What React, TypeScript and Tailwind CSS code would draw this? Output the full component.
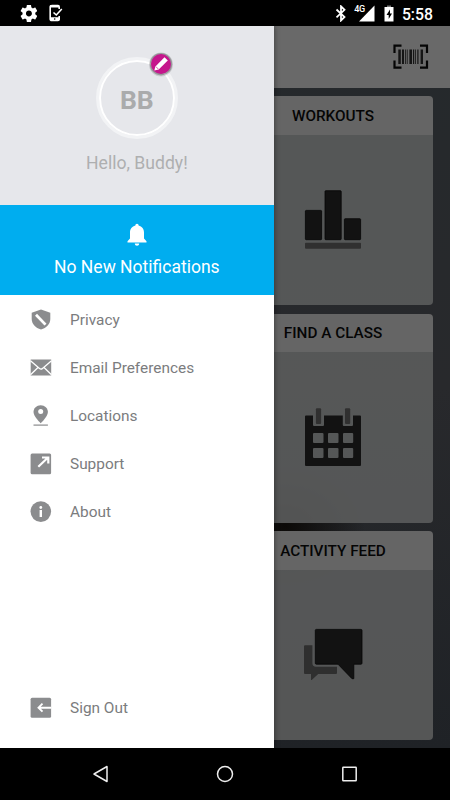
import { useState } from 'react'
import type { ReactNode } from 'react'

const menuItems = [
  { id: 'privacy', label: 'Privacy', icon: <ShieldIcon /> },
  { id: 'email', label: 'Email Preferences', icon: <MailIcon /> },
  { id: 'locations', label: 'Locations', icon: <PinIcon /> },
  { id: 'support', label: 'Support', icon: <SupportIcon /> },
  { id: 'about', label: 'About', icon: <AboutIcon /> },
]

const tiles = [
  { id: 'workouts', title: 'WORKOUTS', icon: <BarsIcon /> },
  { id: 'classes', title: 'FIND A CLASS', icon: <CalendarIcon /> },
  { id: 'feed', title: 'ACTIVITY FEED', icon: <ChatIcon /> },
]

function ShieldIcon() {
  return (
    <svg width="22" height="22" viewBox="0 0 22 22">
      <path d="M11 0.500 L20.300 3.700 V10 C20.300 15 16.500 19 11 20.500 C5.500 19 1.700 15 1.700 10 V3.700 Z" fill="#8b8c8e" />
      <path d="M6 5.800 L15.500 15.600" stroke="#fff" strokeWidth="2.800" />
    </svg>
  )
}

function MailIcon() {
  return (
    <svg width="22" height="22" viewBox="0 0 22 22">
      <rect x="0.700" y="2.500" width="20.500" height="16" fill="#8b8c8e" />
      <path d="M0.500 3.800 L9.500 11.500 Q11 12.800 12.500 11.500 L21.500 3.800 M0.500 17.800 L8 10.500 M21.500 17.800 L14 10.500" fill="none" stroke="#fff" strokeWidth="1.300" />
    </svg>
  )
}

function PinIcon() {
  return (
    <svg width="22" height="22" viewBox="0 0 22 22">
      <path
        d="M10.700 0.200 C6.600 0.200 3.500 3.200 3.500 7.100 C3.500 11.800 10.700 18.300 10.700 18.300 C10.700 18.300 17.900 11.800 17.900 7.100 C17.900 3.200 14.800 0.200 10.700 0.200 Z"
        fill="#8b8c8e"
      />
      <circle cx="10.700" cy="6.600" r="2.500" fill="#fff" />
      <rect x="3.500" y="19.500" width="14.400" height="1.200" fill="#8b8c8e" />
    </svg>
  )
}

function SupportIcon() {
  return (
    <svg width="22" height="22" viewBox="0 0 22 22">
      <rect x="0.600" y="0.500" width="20.500" height="20.700" rx="1.500" fill="#8b8c8e" />
      <path d="M8.300 13.800 L17.500 5 M12 4.500 H18.300 V10.500" fill="none" stroke="#fff" strokeWidth="2.200" />
    </svg>
  )
}

function AboutIcon() {
  return (
    <svg width="22" height="22" viewBox="0 0 22 22">
      <circle cx="10.800" cy="10.600" r="10.300" fill="#8b8c8e" />
      <circle cx="10.800" cy="6.500" r="1.400" fill="#fff" />
      <rect x="9.600" y="9" width="2.400" height="7" fill="#fff" />
    </svg>
  )
}

function SignOutIcon() {
  return (
    <svg width="22" height="22" viewBox="0 0 22 22">
      <rect x="0.600" y="0.700" width="20.500" height="20" rx="1.500" fill="#8b8c8e" />
      <path d="M21.200 10.700 H8.500 M12.500 6.700 L8.500 10.700 L12.500 14.700" fill="none" stroke="#fff" strokeWidth="1.900" />
    </svg>
  )
}

function BarsIcon() {
  return (
    <svg width="60" height="60" viewBox="0 0 60 60">
      <g fill="#121212" stroke="#060606" strokeWidth="0.800">
        <rect x="2.400" y="20.400" width="16.200" height="29.300" rx="0.800" />
        <rect x="22" y="0.700" width="16.200" height="49" rx="0.800" />
        <rect x="41.400" y="28.700" width="16.200" height="21" rx="0.800" />
      </g>
      <rect x="2" y="52.700" width="56" height="6.100" rx="1" fill="#303030" />
    </svg>
  )
}

function CalendarIcon() {
  return (
    <svg width="60" height="60" viewBox="0 0 60 60">
      <path
        d="M3 8.400 H10 V18 Q10 19 11 19 H20 Q21 19 21 18 V8.400 H39.800 V18 Q39.800 19 40.800 19 H49 Q50 19 50 18 V8.400 H57 Q58 8.400 58 9.400 V58 Q58 59 57 59 H3 Q2 59 2 58 V9.400 Q2 8.400 3 8.400 Z M11 26 Q10 26 10 27 V35 Q10 36 11 36 H19.500 Q20.500 36 20.500 35 V27 Q20.500 26 19.500 26 Z M26 26 Q25 26 25 27 V35 Q25 36 26 36 H34.500 Q35.500 36 35.500 35 V27 Q35.500 26 34.500 26 Z M41 26 Q40 26 40 27 V35 Q40 36 41 36 H49.200 Q50.200 36 50.200 35 V27 Q50.200 26 49.200 26 Z M11 41 Q10 41 10 42 V50 Q10 51 11 51 H19.500 Q20.500 51 20.500 50 V42 Q20.500 41 19.500 41 Z M26 41 Q25 41 25 42 V50 Q25 51 26 51 H34.500 Q35.500 51 35.500 50 V42 Q35.500 41 34.500 41 Z M41 41 Q40 41 40 42 V50 Q40 51 41 51 H49.200 Q50.200 51 50.200 50 V42 Q50.200 41 49.200 41 Z"
        fill="#121212"
        fillRule="evenodd"
      />
      <rect x="12.900" y="1.200" width="5.200" height="15.800" rx="1" fill="#303030" />
      <rect x="42" y="1.200" width="5.200" height="15.800" rx="1" fill="#303030" />
    </svg>
  )
}

function ChatIcon() {
  return (
    <svg width="60" height="60" viewBox="0 0 60 60">
      <path
        d="M2 20.200 H9.400 V38 Q9.400 41.800 13 41.800 H34 V48 Q34 49 33 49 H15.200 L8.700 55 H8 V49 H2 Q1 49 1 48 V21.200 Q1 20.200 2 20.200 Z"
        fill="#2f2f2f"
      />
      <path
        d="M13.300 4.400 H58 Q59 4.400 59 5.400 V38.200 Q59 39.200 58 39.200 H50.800 V53.700 H49 L35 39.200 H13.300 Q12.300 39.200 12.300 38.200 V5.400 Q12.300 4.400 13.300 4.400 Z"
        fill="#121212"
        stroke="#060606"
        strokeWidth="0.800"
      />
    </svg>
  )
}

function BarcodeIcon() {
  return (
    <svg width="36" height="26" viewBox="0 0 36 26">
      <path d="M1.500 9 V1.700 H8.500 M27 1.700 H34 V9 M34 16.500 V23.700 H27 M8.500 23.700 H1.500 V16.500" fill="none" stroke="#050505" strokeWidth="2.200" />
      <g fill="#151515">
        <rect x="5.300" y="5.500" width="2.500" height="14.500" />
        <rect x="9" y="5.500" width="2" height="14.500" />
        <rect x="12" y="5.500" width="0.800" height="14.500" />
        <rect x="13.800" y="5.500" width="0.800" height="14.500" />
        <rect x="16.400" y="5.500" width="2.600" height="14.500" />
        <rect x="20" y="5.500" width="1.200" height="14.500" />
        <rect x="22.200" y="5.500" width="0.800" height="14.500" />
        <rect x="24.300" y="5.500" width="1.200" height="14.500" />
        <rect x="27.600" y="5.500" width="2.400" height="14.500" />
      </g>
    </svg>
  )
}

function StatusBar() {
  return (
    <div className="flex h-[26px] items-center bg-black pl-5 text-white">
      <svg width="17" height="17" viewBox="1.500 2 20 20" fill="#fff">
        <path d="M19.430 12.980c.040-.320.070-.640.070-.980s-.030-.660-.070-.980l2.110-1.650c.190-.150.240-.420.120-.640l-2-3.460c-.120-.220-.390-.300-.610-.220l-2.490 1c-.520-.400-1.080-.730-1.690-.980l-.380-2.650C14.460 2.180 14.250 2 14 2h-4c-.250 0-.460.180-.490.420l-.380 2.650c-.610.250-1.170.590-1.690.980l-2.490-1c-.230-.090-.490 0-.610.220l-2 3.460c-.130.220-.070.490.120.640l2.110 1.650c-.040.320-.070.650-.070.980s.030.660.070.980l-2.110 1.650c-.190.150-.240.420-.120.640l2 3.460c.120.220.390.300.610.220l2.490-1c.520.400 1.080.730 1.690.980l.380 2.650c.030.240.240.420.490.420h4c.250 0 .460-.180.490-.420l.380-2.650c.610-.250 1.170-.590 1.690-.980l2.490 1c.230.090.490 0 .610-.220l2-3.460c.120-.220.070-.490-.120-.640l-2.110-1.650zM12 15.500c-1.930 0-3.500-1.570-3.500-3.500s1.570-3.500 3.500-3.500 3.500 1.570 3.500 3.500-1.570 3.500-3.500 3.500z" />
      </svg>
      <svg className="ml-[11px]" width="16" height="18" viewBox="0 0 16 18" fill="none">
        <path d="M11.200 5 V3 Q11.200 1.500 10 1.500 H4 Q2.200 1.500 2.200 3 V15 Q2.200 16.500 4 16.500 H10 Q11.200 16.500 11.200 15 V12" stroke="#fff" strokeWidth="1.600" />
        <path d="M2 13.200 H11.800 V16 H2 Z M2 1.200 H11 V3.600 H2 Z" fill="#fff" />
        <path d="M5.500 8.500 L8.300 11 L13.800 5" stroke="#fff" strokeWidth="1.600" />
        <circle cx="6.700" cy="15" r="0.800" fill="#000" />
      </svg>
      <div className="ml-auto flex items-center pr-[17px]">
        <svg width="12" height="17" viewBox="0 0 12 17" fill="none">
          <path d="M1.500 4.500 L9.500 12 L6 15.500 V1.300 L9.500 4.800 L1.500 12.300" stroke="#fff" strokeWidth="1.800" />
        </svg>
        <div className="ml-[7px] flex">
          <span className="-mr-[6px] h-4 text-[9px] leading-[9px] font-medium tracking-[-0.3px]">4G</span>
          <svg width="16" height="17" viewBox="0 0 16 17">
            <path d="M15.500 0.500 V16.500 H0 Z" fill="#fff" />
          </svg>
        </div>
        <svg className="ml-[9px]" width="10" height="17" viewBox="0 0 10 17">
          <path d="M3 0.500 H7 V2 H3 Z" fill="#777" />
          <path d="M0.500 2 H9.500 V16.500 H0.500 Z" fill="#fff" />
          <path d="M6 4.500 L2.500 10 H4.700 V14 L8 8.500 H6 Z" fill="#000" />
        </svg>
        <span className="ml-2 pt-[3px] text-[15.800px] leading-5 font-medium">5:58</span>
      </div>
    </div>
  )
}

function Tile({ title, icon }: { title: string; icon: ReactNode }) {
  return (
    <div className="flex h-[209px] w-[200px] shrink-0 flex-col overflow-hidden rounded-[4px]">
      <div className="flex h-[38.500px] items-center justify-center bg-[#656565] pt-[2px] text-[15.300px] font-medium text-[#050505]">
        {title}
      </div>
      <div className="flex flex-1 items-center justify-center bg-[#5b5c5c]/90">{icon}</div>
    </div>
  )
}

function MenuRow({ label, icon, onClick }: { label: string; icon: ReactNode; onClick?: () => void }) {
  return (
    <button onClick={onClick} className="flex h-12 w-full items-center gap-[18px] pl-[30px] text-left text-[15.400px] text-[#7b7c7e]">
      {icon}
      <span className="pt-px">{label}</span>
    </button>
  )
}

function Drawer({ onSelect }: { onSelect: (id: string) => void }) {
  return (
    <aside className="absolute top-0 left-0 flex h-full w-[273.700px] flex-col bg-white shadow-[1px_0_5px_rgba(0,0,0,0.35)]">
      <div className="flex h-[178.600px] flex-col items-center bg-[#e6e7eb] pt-[31px]">
        <div className="relative flex size-[82px] items-center justify-center rounded-full border-[3.500px] border-[#f2f3f5]">
          <div className="flex size-full items-center justify-center rounded-full border-2 border-white pt-[3px] text-[26.500px] font-bold text-[#aaabac]">
            BB
          </div>
          <svg className="absolute -top-[10px] right-0" width="28" height="28" viewBox="0 0 28 28">
            <circle cx="14" cy="14.500" r="12" fill="#000" opacity="0.120" />
            <circle cx="14" cy="14.200" r="11.200" fill="#000" opacity="0.250" />
            <circle cx="14" cy="14" r="10" fill="#c5168c" />
            <path d="M7.300 20.500 L8.400 16.400 L17.500 7.300 L20.800 10.600 L11.700 19.500 Z" fill="#fff" />
            <path d="M8.900 16.600 L11.400 19.100" stroke="#c5168c" strokeWidth="0.700" />
          </svg>
        </div>
        <p className="mt-3 text-[17.600px] leading-6 text-[#aeafb0]">Hello, Buddy!</p>
      </div>
      <div className="flex h-[90.400px] flex-col items-center bg-[#00adef] pt-[18.400px] text-white">
        <svg width="20" height="24" viewBox="0 0 20 24" fill="#fff">
          <path d="M10 0.800 C11 0.800 11.600 1.500 11.600 2.500 C15 3.300 17 6 17 9.500 V15.500 L19.500 18.200 V19.500 H0.500 V18.200 L3 15.500 V9.500 C3 6 5 3.300 8.400 2.500 C8.400 1.500 9 0.800 10 0.800 Z" />
          <path d="M7.800 20.500 H12.200 C12.200 23.500 7.800 23.500 7.800 20.500 Z" />
        </svg>
        <p className="mt-2 text-[17.500px] leading-6">No New Notifications</p>
      </div>
      <nav className="flex flex-1 flex-col pt-px">
        {menuItems.map((item) => (
          <MenuRow key={item.id} label={item.label} icon={item.icon} onClick={() => onSelect(item.id)} />
        ))}
        <div className="mt-auto pb-4">
          <MenuRow label="Sign Out" icon={<SignOutIcon />} />
        </div>
      </nav>
    </aside>
  )
}

export default function App() {
  const [, setSelected] = useState<string | null>(null)

  return (
    <div className="mx-auto flex h-[800px] w-[450px] flex-col overflow-hidden bg-black font-['Roboto',sans-serif]">
      <StatusBar />
      <main className="relative flex h-[722px] flex-col overflow-hidden bg-[#26292b] bg-[radial-gradient(ellipse_80px_60px_at_285px_500px,#0b0907,transparent),linear-gradient(to_bottom,#25292c,#28292c,#1f2226)]">
        <header className="flex h-[61.500px] shrink-0 items-center justify-end bg-[#696969] pr-[21px]">
          <BarcodeIcon />
        </header>
        <div className="flex flex-col items-end gap-[8.500px] pt-[8.500px] pr-[17px]">
          {tiles.map((tile) => (
            <Tile key={tile.id} title={tile.title} icon={tile.icon} />
          ))}
        </div>
        <Drawer onSelect={setSelected} />
      </main>
      <nav className="flex h-[52px] items-center justify-between pr-[92px] pl-[92px]">
        <svg width="17" height="18" viewBox="0 0 17 18" fill="none" stroke="#eee" strokeWidth="1.500">
          <path d="M15 1.500 V16.500 L2 9 Z" strokeLinejoin="round" />
        </svg>
        <svg width="18" height="18" viewBox="0 0 18 18" fill="none" stroke="#eee" strokeWidth="1.500">
          <circle cx="9" cy="9" r="7.500" />
        </svg>
        <svg width="17" height="17" viewBox="0 0 17 17" fill="none" stroke="#eee" strokeWidth="1.500">
          <rect x="1.800" y="1.300" width="13.400" height="13.400" rx="0.500" />
        </svg>
      </nav>
    </div>
  )
}
